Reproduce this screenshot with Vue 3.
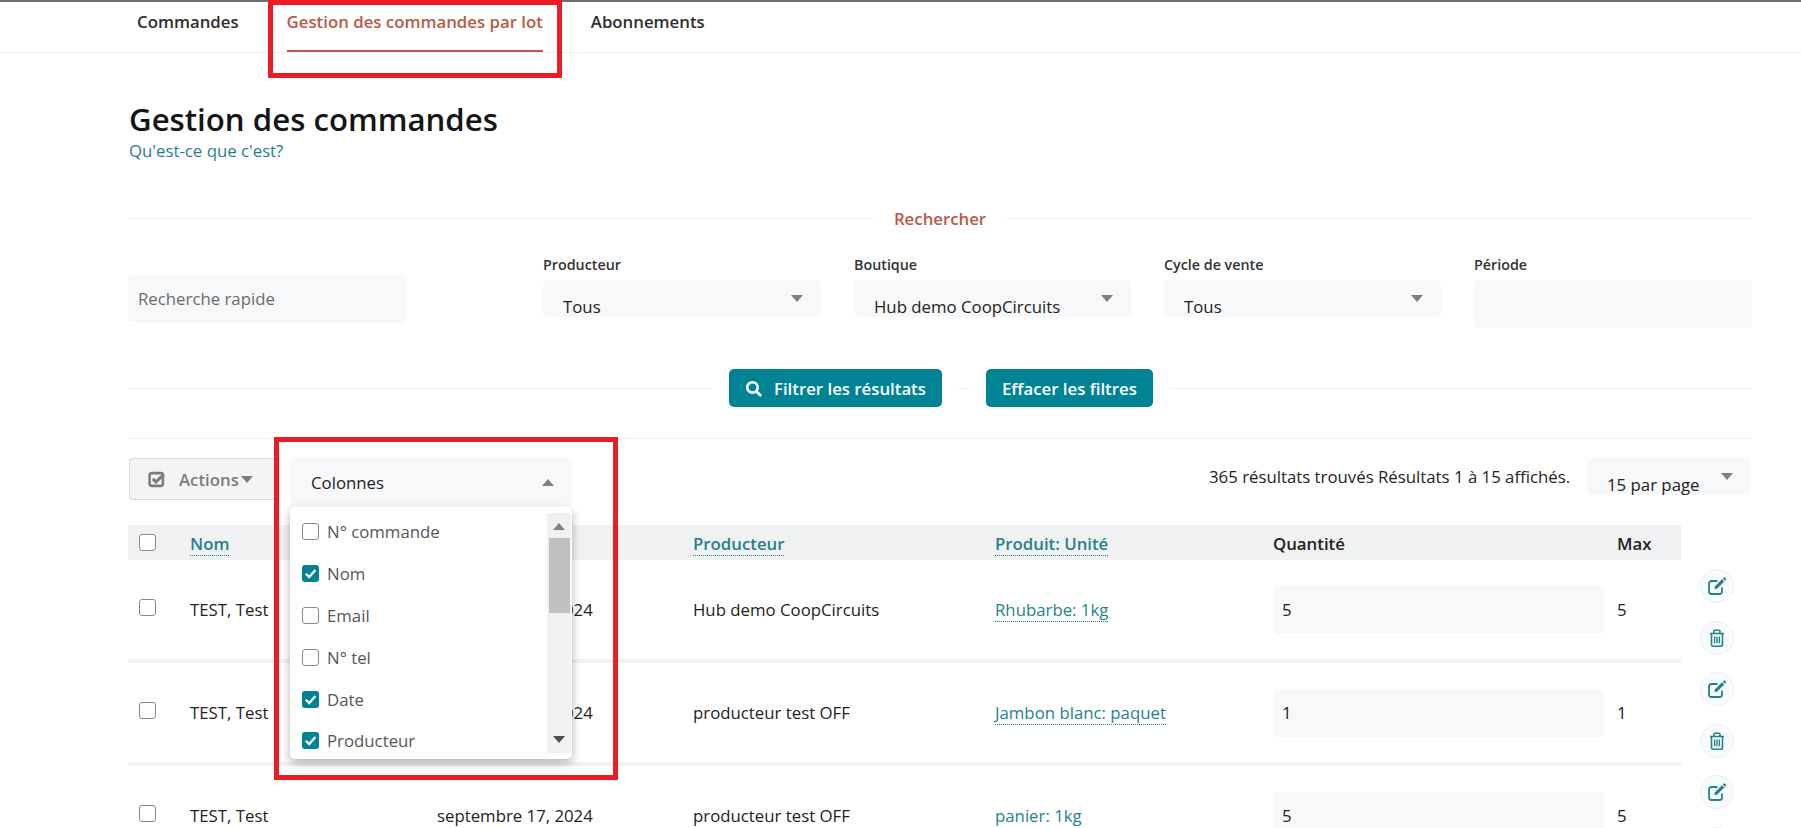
<template>
  <div class="page">
    <div class="topline"></div>
    <nav class="tabs">
      <a v-for="t in tabs" :key="t" class="tab" :class="{ active: t === activeTab }">{{ t }}</a>
    </nav>

    <main class="content">
      <h1>Gestion des commandes</h1>
      <a class="help">Qu'est-ce que c'est?</a>

      <div class="legend"><span class="line"></span><span class="legend-text">Rechercher</span><span class="line"></span></div>

      <div class="filters">
        <div class="quick">Recherche rapide</div>
        <div class="filter-grid">
          <div v-for="f in filters" :key="f.label" class="field">
            <label>{{ f.label }}</label>
            <div v-if="f.value" class="select"><span>{{ f.value }}</span><i class="caret"></i></div>
            <div v-else class="period"></div>
          </div>
        </div>
      </div>

      <div class="btn-row">
        <span class="line first"></span>
        <button class="btn">
          <svg class="search-ico" viewBox="0 0 16 16"><circle cx="7" cy="7" r="4.9" fill="none" stroke="#fff" stroke-width="2.4" /><path d="M10.6 10.6 14.4 14.4" stroke="#fff" stroke-width="2.6" stroke-linecap="round" /></svg>
          Filtrer les résultats
        </button>
        <span class="line short"></span>
        <button class="btn">Effacer les filtres</button>
        <span class="line"></span>
      </div>

      <div class="rule"></div>

      <div class="toolbar">
        <div class="actions-btn">
          <svg class="check-ico" viewBox="0 0 16 16"><path d="M3.5 2h8.500a2 2 0 0 1 2 2v8a2 2 0 0 1-2 2H3.500a2 2 0 0 1-2-2V4a2 2 0 0 1 2-2z" fill="none" stroke="#7c7c7c" stroke-width="2.400" /><path d="M4.500 7.400 7.400 10.200 15 3.200" fill="none" stroke="#7c7c7c" stroke-width="2.800" /></svg>
          <span>Actions</span><i class="caret small"></i>
        </div>

        <div class="columns">
          <div class="columns-head"><span>Colonnes</span><i class="caret up"></i></div>
          <div class="dropdown">
            <div class="options">
              <div v-for="c in columns" :key="c.name" class="option">
                <span class="box" :class="{ on: c.checked }">
                  <svg v-if="c.checked" viewBox="0 0 16 16"><path d="M3.600 8.200 6.800 11.400 12.600 4.800" fill="none" stroke="#fff" stroke-width="2.200" /></svg>
                </span>
                {{ c.name }}
              </div>
            </div>
            <div class="scrollbar">
              <i class="caret up sb-up"></i>
              <div class="thumb"></div>
              <i class="caret sb-down"></i>
            </div>
          </div>
        </div>

        <div class="results">365 résultats trouvés Résultats 1 à 15 affichés.</div>
        <div class="select per-page"><span>15 par page</span><i class="caret"></i></div>
      </div>

      <div class="thead">
        <div class="cells head-cells">
          <div><span class="box"></span></div>
          <div><a class="sort">Nom</a></div>
          <div>Date</div>
          <div><a class="sort">Producteur</a></div>
          <div><a class="sort">Produit: Unité</a></div>
          <div>Quantité</div>
          <div>Max</div>
        </div>
      </div>

      <div v-for="(r, i) in rows" :key="i" class="row">
        <div class="cells">
          <div><span class="box row-box"></span></div>
          <div>{{ r.name }}</div>
          <div>{{ r.date }}</div>
          <div>{{ r.producer }}</div>
          <div><a class="product" :class="{ plain: i === 2 }">{{ r.product }}</a></div>
          <div><div class="qty">{{ r.qty }}</div></div>
          <div>{{ r.max }}</div>
        </div>
        <div class="row-actions">
          <button class="round">
            <svg viewBox="0 0 20 20"><path d="M15 11.500v4a2.500 2.500 0 0 1-2.500 2.500h-8A2.500 2.500 0 0 1 2 15.500v-8A2.500 2.500 0 0 1 4.500 5h6" fill="none" stroke="#26808f" stroke-width="1.800" /><path d="M8 10.200 15 3.200l2.300 2.300-7 7-3 .7z" fill="#26808f" /><path d="M15.800 2.400l.7-.7a1 1 0 0 1 1.400 0l.9.9a1 1 0 0 1 0 1.400l-.7.7z" fill="#26808f" /></svg>
          </button>
          <button class="round">
            <svg viewBox="0 0 20 20"><path d="M3 5.500h14M7 5V3.200A1 1 0 0 1 8 2.200h4a1 1 0 0 1 1 1V5" fill="none" stroke="#26808f" stroke-width="1.600" /><path d="M4.500 5.500V16.500A1.800 1.800 0 0 0 6.300 18.300h7.400a1.800 1.800 0 0 0 1.800-1.800V5.500" fill="none" stroke="#26808f" stroke-width="1.600" /><path d="M7.600 8.500v6.800M10 8.500v6.800M12.400 8.500v6.800" stroke="#26808f" stroke-width="1.400" /></svg>
          </button>
        </div>
      </div>
    </main>

    <!-- annotations rouges par dessus la capture -->
    <div class="mark mark-tab"></div>
    <div class="mark mark-cols"></div>
  </div>
</template>

<script setup>
const tabs = ['Commandes', 'Gestion des commandes par lot', 'Abonnements']
const activeTab = 'Gestion des commandes par lot'

const filters = [
  { label: 'Producteur', value: 'Tous' },
  { label: 'Boutique', value: 'Hub demo CoopCircuits' },
  { label: 'Cycle de vente', value: 'Tous' },
  { label: 'Période', value: '' }
]

const columns = [
  { name: 'N° commande', checked: false },
  { name: 'Nom', checked: true },
  { name: 'Email', checked: false },
  { name: 'N° tel', checked: false },
  { name: 'Date', checked: true },
  { name: 'Producteur', checked: true }
]

const rows = [
  { name: 'TEST, Test', date: 'septembre 17, 2024', producer: 'Hub demo CoopCircuits', product: 'Rhubarbe: 1kg', qty: 5, max: 5 },
  { name: 'TEST, Test', date: 'septembre 17, 2024', producer: 'producteur test OFF', product: 'Jambon blanc: paquet', qty: 1, max: 1 },
  { name: 'TEST, Test', date: 'septembre 17, 2024', producer: 'producteur test OFF', product: 'panier: 1kg', qty: 5, max: 5 }
]
</script>

<style>
html, body { margin: 0; background: #fff; overflow: hidden; }
</style>

<style scoped>
.page {
  position: relative;
  height: 828px;
  overflow: hidden;
  background: #fff;
  color: #222;
  font-family: "Open Sans", "Noto Sans", sans-serif;
  font-size: 16.8px;
}

.topline { height: 2px; background: #6e6e76; }

.tabs {
  display: flex;
  height: 50px;
  padding-left: 137px;
  border-bottom: 1px solid #eeeeee;
}
.tab {
  height: 40px;
  line-height: 40px;
  margin-right: 48px;
  font-weight: 600;
  color: #2e2e2e;
}
.tab.active {
  height: 48px;
  color: #b85a45;
  border-bottom: 2px solid #b85a45;
}

.content { padding: 0 49px 0 128px; }

h1 {
  margin: 46px 0 0 1px;
  font-size: 31.2px;
  line-height: 40px;
  font-weight: 600;
  color: #151515;
}
.help { display: block; line-height: 22px; margin: 1px 0 0 1px; color: #1f7f8e; }

.line { flex: 1; height: 1px; background: #eef0f0; }

.legend {
  display: flex;
  align-items: center;
  margin-top: 44px;
  height: 24px;
}
.legend-text { padding: 0 20px; color: #b85a45; font-weight: 600; }

.filters { display: flex; margin-top: 26px; }
.quick {
  width: 269px;
  height: 48px;
  margin-top: 19px;
  padding-left: 10px;
  line-height: 48px;
  background: #f7f8f9;
  border-radius: 5px;
  color: #6b6b6b;
}
.filter-grid {
  display: grid;
  grid-template-columns: 278px 277px 277px 278px;
  column-gap: 33px;
  margin-left: 136px;
}
.field label { display: block; height: 24px; line-height: 18px; font-size: 14.3px; font-weight: 600; color: #333; }

.select {
  position: relative;
  height: 37px;
  padding-left: 20px;
  overflow: hidden;
  line-height: 53px;
  background: #f7f8f9;
  border-radius: 5px;
}
.period { height: 48px; background: #f7f8f9; border-radius: 5px; }

.caret {
  display: inline-block;
  width: 0;
  height: 0;
  border-left: 6px solid transparent;
  border-right: 6px solid transparent;
  border-top: 7px solid #808080;
}
.caret.up { border-top: 0; border-bottom: 7px solid #808080; }
.select .caret { position: absolute; top: 15px; right: 18px; }

.btn-row { display: flex; align-items: center; gap: 17px; margin-top: 41px; }
.line.first { flex: 0 0 584px; }
.line.short { flex: 0 0 10px; }
.btn {
  display: flex;
  align-items: center;
  height: 38px;
  padding: 0 16px;
  border: 0;
  border-radius: 5px;
  background: #008395;
  color: #fff;
  font-family: inherit;
  font-size: 16.8px;
  font-weight: 600;
}
.search-ico { width: 17px; height: 17px; margin-right: 12px; }

.rule { height: 1px; margin-top: 31px; background: #eef0f0; }

.toolbar { display: flex; align-items: flex-start; margin-top: 19px; height: 67px; }
.actions-btn {
  display: flex;
  align-items: center;
  box-sizing: border-box;
  width: 146px;
  height: 42px;
  margin-left: 1px;
  padding-left: 18px;
  border: 1px solid #d9d9d9;
  border-right: 0;
  border-radius: 4px 0 0 4px;
  background: #f4f4f4;
  color: #7c7c7c;
  font-weight: 600;
}
.check-ico { width: 17px; height: 17px; margin-right: 14px; }
.actions-btn .caret { margin-left: 2px; border-top-color: #7c7c7c; }

.columns { position: relative; width: 282px; z-index: 2; margin-right: 637px; margin-left: 15px; }
.columns-head {
  position: relative;
  height: 48px;
  padding-left: 21px;
  line-height: 50px;
  background: #f7f8f9;
  border-radius: 5px;
}
.columns-head .caret { position: absolute; right: 18px; top: 21px; }
.dropdown {
  position: absolute;
  top: 49px;
  left: 0;
  display: flex;
  width: 282px;
  height: 252px;
  overflow: hidden;
  background: #fff;
  border-radius: 5px;
  box-shadow: 0 4px 10px rgba(0, 0, 0, .3);
}
.options { flex: 1; padding-top: 4px; }
.option {
  display: flex;
  align-items: center;
  height: 41.8px;
  padding-left: 12px;
  color: #555;
}
.box {
  display: inline-block;
  box-sizing: border-box;
  flex: none;
  width: 17px;
  height: 17px;
  border: 1.5px solid #8a8a8a;
  border-radius: 3px;
  background: #fff;
}
.option .box { margin-right: 8px; }
.box.on { border: 0; background: #008395; }
.box svg { display: block; width: 17px; height: 17px; }
.scrollbar {
  position: relative;
  flex: none;
  width: 24px;
  height: 240px;
  margin: 6px 1px 0 0;
  background: #f1f1f1;
}
.thumb { position: absolute; top: 25px; left: 2px; width: 21px; height: 75px; background: #c1c1c1; }
.sb-up { position: absolute; top: 10px; left: 6px; border-bottom-color: #a3a3a3; }
.sb-down { position: absolute; bottom: 10px; left: 6px; border-top-color: #505050; }

.results { width: 378px; line-height: 38px; white-space: nowrap; }
.per-page { width: 144px; flex: none; }

.thead, .row { display: flex; }
.cells {
  display: grid;
  grid-template-columns: 62px 247px 256px 302px 278px 344px 64px;
  align-items: center;
  box-sizing: border-box;
  width: 1553px;
}
.cells > div:first-child { padding-left: 11px; line-height: 0; }
.head-cells {
  height: 35px;
  background: #f0f1f2;
  font-weight: 600;
  color: #222;
}
.head-cells > div:not(:first-child) { padding-top: 1px; }
.sort {
  color: #26808f;
  border-bottom: 1px dotted #26808f;
}

.row .cells { height: 103px; border-bottom: 4px solid #f0f1f2; }
.row-box { position: relative; top: -2px; }
.product { color: #26808f; border-bottom: 1px dotted #26808f; }
.product.plain { border-bottom: 0; }
.qty {
  box-sizing: border-box;
  width: 331px;
  height: 48px;
  padding-left: 9px;
  line-height: 48px;
  background: #f7f8f9;
  border-radius: 5px;
}

.row-actions {
  display: flex;
  flex-direction: column;
  align-items: center;
  justify-content: center;
  gap: 18px;
  width: 71px;
  height: 103px;
}
.round {
  display: flex;
  align-items: center;
  justify-content: center;
  width: 34px;
  height: 34px;
  padding: 0;
  border: 1px solid #eaf3f4;
  border-radius: 50%;
  background: #f6fbfb;
}
.round svg { width: 20px; height: 20px; }

.mark {
  position: absolute;
  box-sizing: border-box;
  border: 5px solid #ed1c24;
  z-index: 5;
}
.mark-tab { left: 268px; top: 0; width: 294px; height: 78px; }
.mark-cols { left: 274px; top: 437px; width: 344px; height: 343px; }
</style>
